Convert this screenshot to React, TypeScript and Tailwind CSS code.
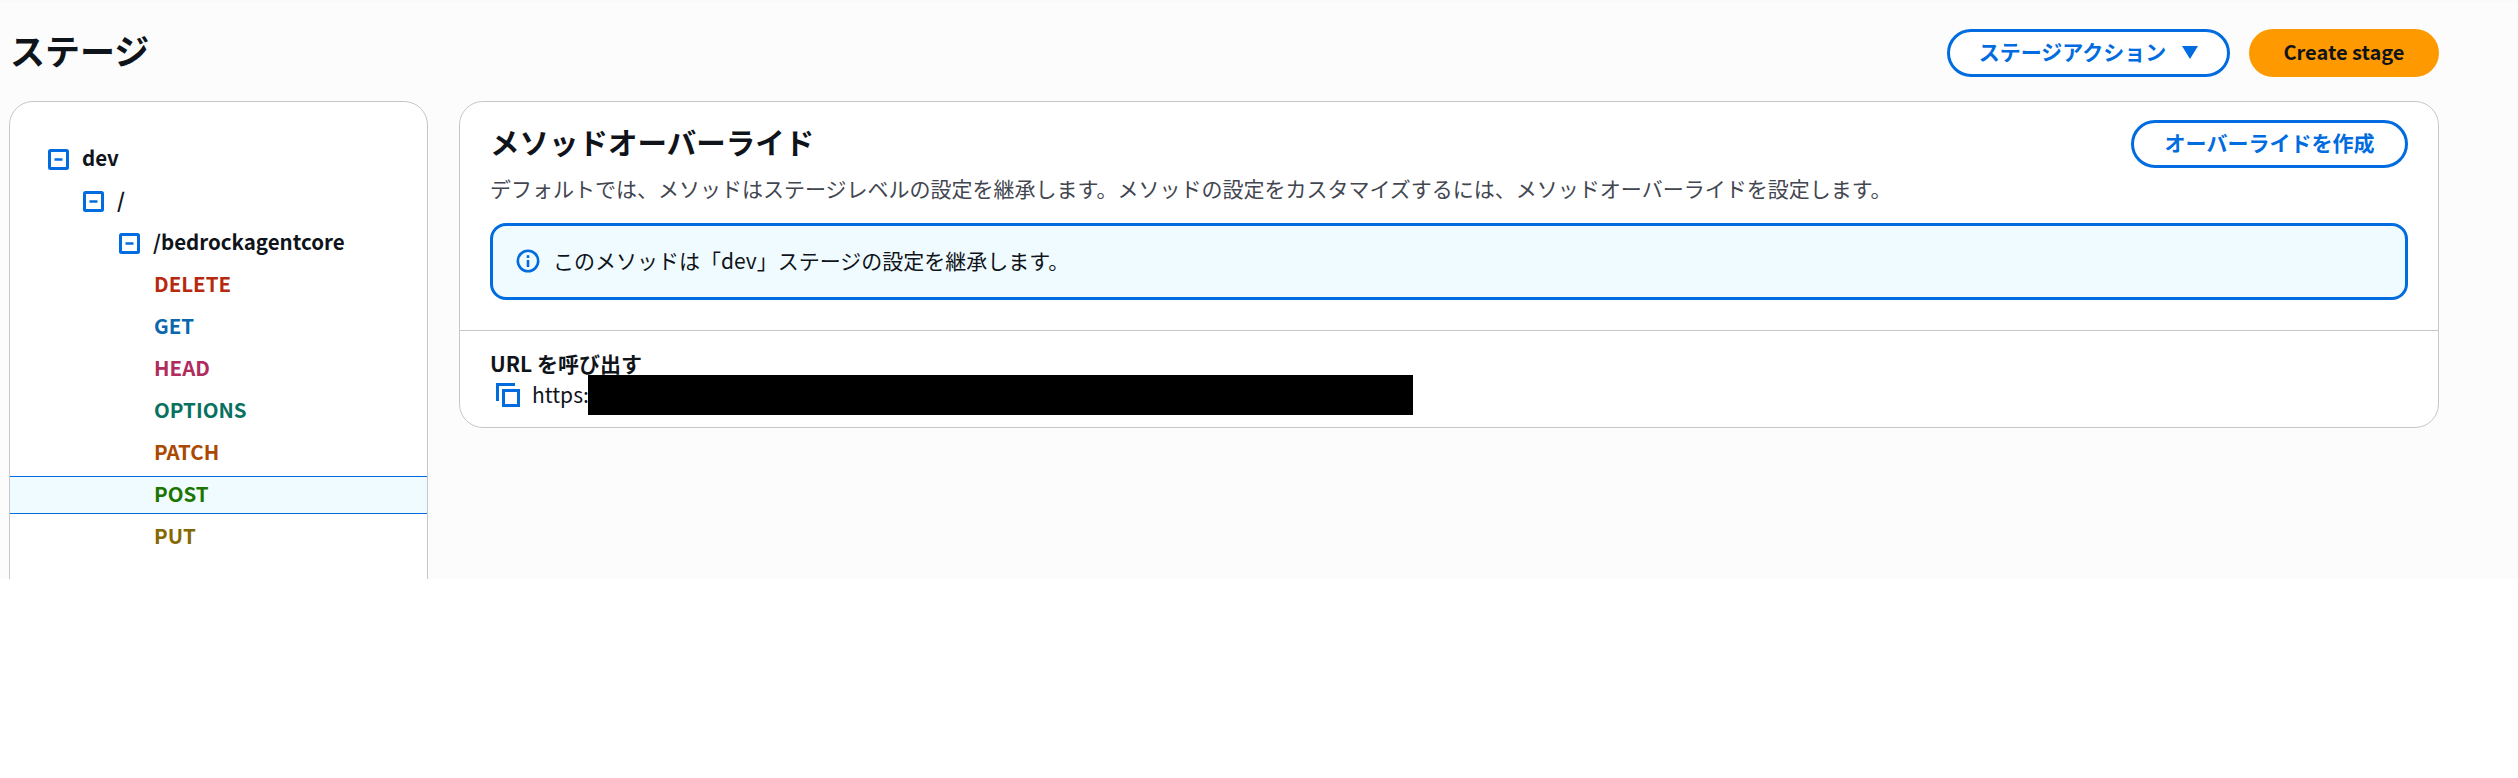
import React from 'react';

const FONT = "font-['Noto_Sans_CJK_JP','Noto_Sans',sans-serif]";

interface TreeRow {
  label: string;
  indent: string;
  expandable?: boolean;
  color?: string;
  selected?: boolean;
}

const rows: TreeRow[] = [
  { label: 'dev', indent: 'pl-[38px]', expandable: true },
  { label: '/', indent: 'pl-[73px]', expandable: true },
  { label: '/bedrockagentcore', indent: 'pl-[109px]', expandable: true },
  { label: 'DELETE', indent: 'pl-[144px]', color: 'text-[#b7290e]' },
  { label: 'GET', indent: 'pl-[144px]', color: 'text-[#0a66ad]' },
  { label: 'HEAD', indent: 'pl-[144px]', color: 'text-[#b02c5d]' },
  { label: 'OPTIONS', indent: 'pl-[144px]', color: 'text-[#08715f]' },
  { label: 'PATCH', indent: 'pl-[144px]', color: 'text-[#a94a00]' },
  { label: 'POST', indent: 'pl-[144px]', color: 'text-[#1c7500]', selected: true },
  { label: 'PUT', indent: 'pl-[144px]', color: 'text-[#856800]' },
];

function MinusBox() {
  return (
    <svg width="21" height="21" viewBox="0 0 21 21" fill="none" className="shrink-0 mr-[13px]">
      <rect x="1.5" y="1.5" width="18" height="18" rx="1" stroke="#006ce0" strokeWidth="3" />
      <path d="M6.5 10.5h8" stroke="#006ce0" strokeWidth="2.5" />
    </svg>
  );
}

function InfoIcon() {
  return (
    <svg width="24" height="24" viewBox="0 0 24 24" fill="none" className="shrink-0">
      <circle cx="12" cy="12" r="10.2" stroke="#006ce0" strokeWidth="2.6" />
      <path d="M12 11v7" stroke="#006ce0" strokeWidth="2.6" />
      <path d="M12 6.2v2.8" stroke="#006ce0" strokeWidth="2.6" />
    </svg>
  );
}

function CopyIcon() {
  return (
    <svg width="24" height="24" viewBox="0 0 24 24" fill="none" className="shrink-0">
      <path d="M1.5 18V1.5H19" stroke="#006ce0" strokeWidth="3" />
      <rect x="7.5" y="7.5" width="15" height="15" stroke="#006ce0" strokeWidth="3" />
    </svg>
  );
}

export default function App() {
  return (
    <div className={`${FONT} min-h-screen bg-white`}>
      <div className="h-[579px] overflow-hidden bg-[#fcfcfc] border-t-2 border-[#fafafa] pl-[9px] pr-[79px] pt-[27px]">
        <div className="flex items-center justify-between h-[48px] mb-[24px]">
          <h1 className="text-[35px] font-bold text-[#0f141a] leading-[48px] ml-[1px] mt-[-6px]">ステージ</h1>
          <div className="flex items-center gap-[19px]">
            <button className="h-[48px] w-[283px] pb-[2px] rounded-full border-[3px] border-[#006ce0] bg-white text-[#006ce0] text-[21px] font-bold flex items-center justify-center">
              ステージアクション
              <svg width="16" height="13" viewBox="0 0 16 13" className="ml-[16px]"><path d="M0 0h16L8 13z" fill="#006ce0" /></svg>
            </button>
            <button className="h-[48px] w-[190px] pb-[2px] rounded-full bg-[#ff9900] text-[#0f141a] text-[20px] font-bold">Create stage</button>
          </div>
        </div>
        <div className="flex items-start gap-[31px]">
          <div className="w-[419px] h-[560px] shrink-0 rounded-[24px] border border-[#c6c6cd] bg-white pt-[36px]">
            {rows.map((row) => (
              <div
                key={row.label}
                className={`flex items-center ${row.indent} ${row.selected ? 'h-[38px] my-[2px] border-y border-[#006ce0] bg-[#f0fbff]' : 'h-[42px]'}`}
              >
                {row.expandable && <MinusBox />}
                <span className={`text-[20.5px] font-bold mb-[3px] ${row.color ?? 'text-[#0f141a]'}`}>{row.label}</span>
              </div>
            ))}
          </div>
          <div className="flex-1 h-[327px] rounded-[24px] border border-[#c6c6cd] bg-white">
            <div className="px-[30px] pt-[18px] h-[229px] border-b border-[#c6c6cd]">
              <div className="flex items-start justify-between">
                <h2 className="text-[29.5px] font-bold text-[#0f141a] leading-[42px]">メソッドオーバーライド</h2>
                <button className="h-[48px] w-[277px] pb-[2px] rounded-full border-[3px] border-[#006ce0] bg-white text-[#006ce0] text-[21px] font-bold">オーバーライドを作成</button>
              </div>
              <p className="text-[21px] text-[#424650] leading-[28px] mt-[6px]">デフォルトでは、メソッドはステージレベルの設定を継承します。メソッドの設定をカスタマイズするには、メソッドオーバーライドを設定します。</p>
              <div className="mt-[21px] h-[77px] pb-[2px] rounded-[16px] border-[3px] border-[#006ce0] bg-[#f0fbff] flex items-center pl-[23px] gap-[13px]">
                <InfoIcon />
                <span className="text-[21px] text-[#0f141a]">このメソッドは「dev」ステージの設定を継承します。</span>
              </div>
            </div>
            <div className="px-[30px] pt-[20px]">
              <div className="text-[21px] font-bold text-[#0f141a] leading-[24px]">URL を呼び出す</div>
              <div className="flex items-center h-[40px] pl-[6px]">
                <CopyIcon />
                <span className="text-[21px] text-[#0f141a] ml-[12px] w-[56px]">https:</span>
                <div className="w-[825px] h-[40px] bg-black" />
              </div>
            </div>
          </div>
        </div>
      </div>
    </div>
  );
}
